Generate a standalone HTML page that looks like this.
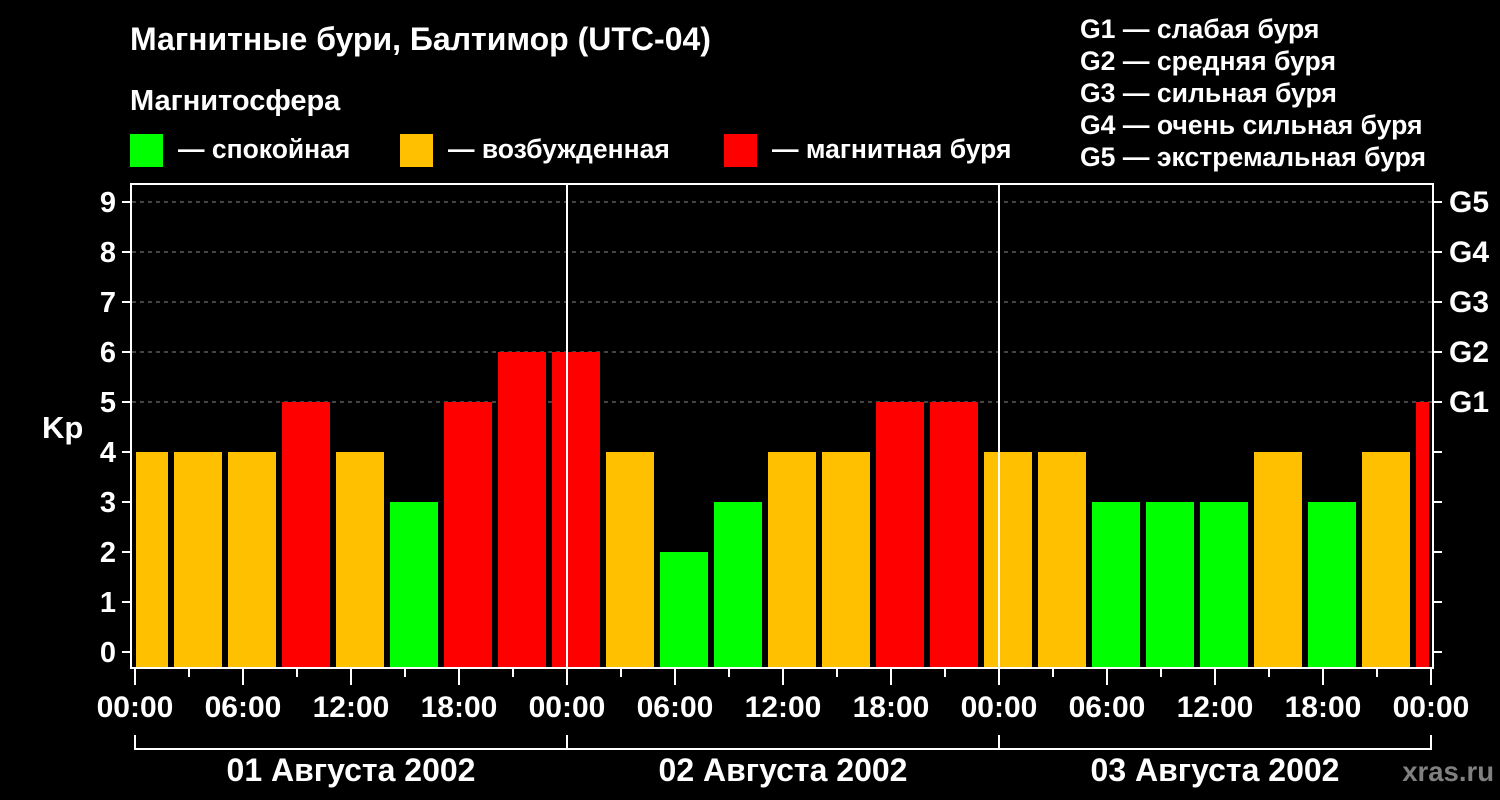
<!DOCTYPE html>
<html><head><meta charset="utf-8"><style>
body{margin:0;background:#000;}
svg{display:block;font-family:"Liberation Sans",sans-serif;font-weight:bold;}
</style></head><body>
<svg width="1500" height="800" xmlns="http://www.w3.org/2000/svg">
<rect width="1500" height="800" fill="#000"/>
<g fill="#fff">
<text x="130" y="50" font-size="32">Магнитные бури, Балтимор (UTC-04)</text>
<text x="130" y="110" font-size="29">Магнитосфера</text>
<text x="178" y="158" font-size="26.5">— спокойная</text>
<text x="448" y="158" font-size="26.5">— возбужденная</text>
<text x="772" y="158" font-size="26.5">— магнитная буря</text>
<text x="1080" y="38" font-size="26.6">G1 — слабая буря</text>
<text x="1080" y="70" font-size="26.6">G2 — средняя буря</text>
<text x="1080" y="102" font-size="26.6">G3 — сильная буря</text>
<text x="1080" y="134" font-size="26.6">G4 — очень сильная буря</text>
<text x="1080" y="166" font-size="26.6">G5 — экстремальная буря</text>
</g>
<rect x="130" y="134" width="33" height="33" fill="#00ff00"/>
<rect x="400" y="134" width="33" height="33" fill="#ffc000"/>
<rect x="724" y="134" width="33" height="33" fill="#ff0000"/>
<g stroke="#888" stroke-width="1" stroke-dasharray="4,4">
<line x1="132" y1="202" x2="1432" y2="202"/><line x1="132" y1="252" x2="1432" y2="252"/>
<line x1="132" y1="302" x2="1432" y2="302"/><line x1="132" y1="352" x2="1432" y2="352"/>
<line x1="132" y1="402" x2="1432" y2="402"/>
</g>
<g>
<rect x="136" y="452" width="32" height="216" fill="#ffc000"/>
<rect x="174" y="452" width="48" height="216" fill="#ffc000"/>
<rect x="228" y="452" width="48" height="216" fill="#ffc000"/>
<rect x="282" y="402" width="48" height="266" fill="#ff0000"/>
<rect x="336" y="452" width="48" height="216" fill="#ffc000"/>
<rect x="390" y="502" width="48" height="166" fill="#00ff00"/>
<rect x="444" y="402" width="48" height="266" fill="#ff0000"/>
<rect x="498" y="352" width="48" height="316" fill="#ff0000"/>
<rect x="552" y="352" width="48" height="316" fill="#ff0000"/>
<rect x="606" y="452" width="48" height="216" fill="#ffc000"/>
<rect x="660" y="552" width="48" height="116" fill="#00ff00"/>
<rect x="714" y="502" width="48" height="166" fill="#00ff00"/>
<rect x="768" y="452" width="48" height="216" fill="#ffc000"/>
<rect x="822" y="452" width="48" height="216" fill="#ffc000"/>
<rect x="876" y="402" width="48" height="266" fill="#ff0000"/>
<rect x="930" y="402" width="48" height="266" fill="#ff0000"/>
<rect x="984" y="452" width="48" height="216" fill="#ffc000"/>
<rect x="1038" y="452" width="48" height="216" fill="#ffc000"/>
<rect x="1092" y="502" width="48" height="166" fill="#00ff00"/>
<rect x="1146" y="502" width="48" height="166" fill="#00ff00"/>
<rect x="1200" y="502" width="48" height="166" fill="#00ff00"/>
<rect x="1254" y="452" width="48" height="216" fill="#ffc000"/>
<rect x="1308" y="502" width="48" height="166" fill="#00ff00"/>
<rect x="1362" y="452" width="48" height="216" fill="#ffc000"/>
<rect x="1416" y="402" width="13" height="266" fill="#ff0000"/>
</g>
<g stroke="#fff" stroke-width="2" fill="none">
<rect x="131" y="184" width="1302" height="484"/>
<line x1="567" y1="184" x2="567" y2="668"/><line x1="999" y1="184" x2="999" y2="668"/>
<path d="M122 202H131M122 252H131M122 302H131M122 352H131M122 402H131M122 452H131M122 502H131M122 552H131M122 602H131M122 652H131"/>
<path d="M1433 202H1442M1433 252H1442M1433 302H1442M1433 352H1442M1433 402H1442M1433 452H1442M1433 502H1442M1433 552H1442M1433 602H1442M1433 652H1442"/>
<path d="M135 668V685M243 668V685M351 668V685M459 668V685M567 668V685M675 668V685M783 668V685M891 668V685M999 668V685M1107 668V685M1215 668V685M1323 668V685M1431 668V685"/>
<path d="M189 668V677M297 668V677M405 668V677M513 668V677M621 668V677M729 668V677M837 668V677M945 668V677M1053 668V677M1161 668V677M1269 668V677M1377 668V677"/>
<path d="M135 735V749H1431V735M567 735V749M999 735V749"/>
</g>
<g fill="#fff" font-size="29" text-anchor="end">
<text x="116" y="212">9</text><text x="116" y="262">8</text><text x="116" y="312">7</text>
<text x="116" y="362">6</text><text x="116" y="412">5</text><text x="116" y="462">4</text>
<text x="116" y="512">3</text><text x="116" y="562">2</text><text x="116" y="612">1</text>
<text x="116" y="662">0</text>
</g>
<text x="42" y="438" fill="#fff" font-size="31">Kp</text>
<g fill="#fff" font-size="30">
<text x="1449" y="212">G5</text><text x="1449" y="262">G4</text><text x="1449" y="312">G3</text>
<text x="1449" y="362">G2</text><text x="1449" y="412">G1</text>
</g>
<g fill="#fff" font-size="30" text-anchor="middle">
<text x="135" y="717">00:00</text><text x="243" y="717">06:00</text><text x="351" y="717">12:00</text>
<text x="459" y="717">18:00</text><text x="567" y="717">00:00</text><text x="675" y="717">06:00</text>
<text x="783" y="717">12:00</text><text x="891" y="717">18:00</text><text x="999" y="717">00:00</text>
<text x="1107" y="717">06:00</text><text x="1215" y="717">12:00</text><text x="1323" y="717">18:00</text>
<text x="1431" y="717">00:00</text>
</g>
<g fill="#fff" font-size="32" text-anchor="middle">
<text x="351" y="781">01 Августа 2002</text>
<text x="783" y="781">02 Августа 2002</text>
<text x="1215" y="781">03 Августа 2002</text>
</g>
<text x="1494" y="781" fill="#808080" font-size="27.5" text-anchor="end">xras.ru</text>
</svg>
</body></html>
